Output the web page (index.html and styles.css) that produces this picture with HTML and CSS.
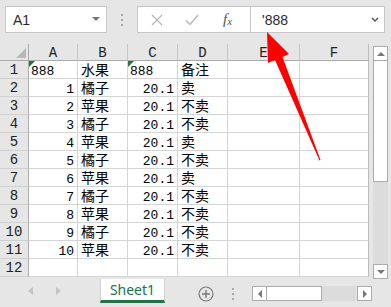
FILE: index.html
```html
<!DOCTYPE html>
<html lang="zh-CN">
<head>
    <meta charset="UTF-8">
    <title>Sheet1</title>
    <link rel="stylesheet" href="styles.css">
</head>
<body>

    <div class="formula-bar">
        <div class="name-box">
            <span>A1</span>
            <svg class="caret" width="8" height="5" viewBox="0 0 8 5"><path d="M0 0h8L4 4z" fill="#777"/></svg>
        </div>
        <div class="grip"><i></i><i></i><i></i></div>
        <div class="fx-box">
            <svg width="12" height="12" viewBox="0 0 12 12"><path d="M1 1l10 10M11 1L1 11" stroke="#b9b9b9" stroke-width="1.3"/></svg>
            <svg width="14" height="12" viewBox="0 0 14 12"><path d="M1 6.5l4 4L13 1" stroke="#b9b9b9" stroke-width="1.5" fill="none"/></svg>
            <span class="fx">f<sub>x</sub></span>
        </div>
        <div class="formula">
            <span>'888</span>
            <svg class="chev" width="8" height="5" viewBox="0 0 8 5"><path d="M1 1l3 3 3-3" stroke="#555" stroke-width="1.4" fill="none"/></svg>
        </div>
    </div>

    <div class="main">
        <div class="sheet">
            <div class="cell corner"><svg width="10" height="10" viewBox="0 0 10 10"><path d="M10 0v10H0z" fill="#b8b8b8"/></svg></div>
            <div class="cell hd">A</div><div class="cell hd">B</div><div class="cell hd">C</div><div class="cell hd">D</div><div class="cell hd">E</div><div class="cell hd">F</div>

            <div class="cell rh">1</div><div class="cell tx flag">888</div><div class="cell t">水果</div><div class="cell tx flag">888</div><div class="cell t">备注</div><div class="cell"></div><div class="cell"></div>
            <div class="cell rh">2</div><div class="cell n">1</div><div class="cell t">橘子</div><div class="cell n">20.1</div><div class="cell t">卖</div><div class="cell"></div><div class="cell"></div>
            <div class="cell rh">3</div><div class="cell n">2</div><div class="cell t">苹果</div><div class="cell n">20.1</div><div class="cell t">不卖</div><div class="cell"></div><div class="cell"></div>
            <div class="cell rh">4</div><div class="cell n">3</div><div class="cell t">橘子</div><div class="cell n">20.1</div><div class="cell t">不卖</div><div class="cell"></div><div class="cell"></div>
            <div class="cell rh">5</div><div class="cell n">4</div><div class="cell t">苹果</div><div class="cell n">20.1</div><div class="cell t">卖</div><div class="cell"></div><div class="cell"></div>
            <div class="cell rh">6</div><div class="cell n">5</div><div class="cell t">橘子</div><div class="cell n">20.1</div><div class="cell t">不卖</div><div class="cell"></div><div class="cell"></div>
            <div class="cell rh">7</div><div class="cell n">6</div><div class="cell t">苹果</div><div class="cell n">20.1</div><div class="cell t">卖</div><div class="cell"></div><div class="cell"></div>
            <div class="cell rh">8</div><div class="cell n">7</div><div class="cell t">橘子</div><div class="cell n">20.1</div><div class="cell t">不卖</div><div class="cell"></div><div class="cell"></div>
            <div class="cell rh">9</div><div class="cell n">8</div><div class="cell t">苹果</div><div class="cell n">20.1</div><div class="cell t">不卖</div><div class="cell"></div><div class="cell"></div>
            <div class="cell rh">10</div><div class="cell n">9</div><div class="cell t">橘子</div><div class="cell n">20.1</div><div class="cell t">不卖</div><div class="cell"></div><div class="cell"></div>
            <div class="cell rh">11</div><div class="cell n">10</div><div class="cell t">苹果</div><div class="cell n">20.1</div><div class="cell t">不卖</div><div class="cell"></div><div class="cell"></div>
            <div class="cell rh">12</div><div class="cell"></div><div class="cell"></div><div class="cell"></div><div class="cell"></div><div class="cell"></div><div class="cell"></div>
        </div>

        <div class="vscroll">
            <div class="sbtn"><svg width="8" height="4" viewBox="0 0 8 4"><path d="M0 4h8L4 0z" fill="#777"/></svg></div>
            <div class="vthumb"></div>
            <div class="track"></div>
            <div class="sbtn"><svg width="8" height="4" viewBox="0 0 8 4"><path d="M0 0h8L4 4z" fill="#777"/></svg></div>
        </div>
    </div>

    <div class="tabs">
        <div class="nav">
            <svg width="5" height="8" viewBox="0 0 5 8"><path d="M5 0v8L0 4z" fill="#c4c4c4"/></svg>
            <svg width="5" height="8" viewBox="0 0 5 8"><path d="M0 0v8l5-4z" fill="#c4c4c4"/></svg>
        </div>
        <div class="tab">Sheet1</div>
        <svg class="add" width="16" height="16" viewBox="0 0 16 16"><circle cx="8" cy="8" r="7" fill="none" stroke="#7a7a7a" stroke-width="1.2"/><path d="M8 4v8M4 8h8" stroke="#7a7a7a" stroke-width="1.4"/></svg>
        <div class="grip small"><i></i><i></i><i></i></div>
        <div class="hscroll">
            <div class="sbtn"><svg width="4" height="8" viewBox="0 0 4 8"><path d="M4 0v8L0 4z" fill="#777"/></svg></div>
            <div class="hthumb"></div>
            <div class="track"></div>
            <div class="sbtn"><svg width="4" height="8" viewBox="0 0 4 8"><path d="M0 0v8l4-4z" fill="#777"/></svg></div>
        </div>
    </div>

    <!-- red annotation arrow on top of everything -->
    <svg class="arrow" width="391" height="307" viewBox="0 0 391 307">
        <polygon points="267,32 289,54 282.5,57 320.5,160 319.5,160.5 275,60 268,63" fill="#fe0000"/>
    </svg>

</body>
</html>
```

FILE: styles.css
```css
body {
    margin: 0;
    width: 391px;
    height: 307px;
    overflow: hidden;
    background-color: #e6e6e6;
    font-family: "Liberation Sans", Arial, sans-serif;
    position: relative;
}

/* formula bar */
.formula-bar {
    height: 40px;
    box-sizing: border-box;
    padding: 6px 0 0 5px;
    display: flex;
    align-items: flex-start;
}
.name-box {
    width: 102px;
    height: 27px;
    box-sizing: border-box;
    background-color: #fff;
    border: 1px solid #c6c6c6;
    display: flex;
    align-items: center;
    justify-content: space-between;
    padding: 0 6px 0 7px;
    font-size: 14px;
    color: #2b2b2b;
}
.grip {
    width: 30px;
    height: 27px;
    display: flex;
    flex-direction: column;
    align-items: center;
    justify-content: center;
    gap: 3px;
}
.grip i {
    display: block;
    width: 2px;
    height: 2px;
    background-color: #a8a8a8;
}
.fx-box {
    width: 113px;
    height: 27px;
    box-sizing: border-box;
    background-color: #fff;
    border: 1px solid #c6c6c6;
    border-right: none;
    display: flex;
    align-items: center;
    padding-left: 13px;
    gap: 22px;
}
.fx {
    font-family: "Liberation Serif", serif;
    font-style: italic;
    font-size: 15px;
    color: #555;
    margin-left: 2px;
}
.fx sub {
    font-size: 11px;
    vertical-align: -1px;
}
.formula {
    width: 135px;
    height: 27px;
    box-sizing: border-box;
    background-color: #fff;
    border: 1px solid #c6c6c6;
    display: flex;
    align-items: center;
    justify-content: space-between;
    padding: 0 5px 0 11px;
    font-size: 14px;
    color: #2b2b2b;
}

/* grid */
.main {
    display: flex;
    height: 239px;
}
.sheet {
    display: grid;
    grid-template-columns: 29px 49px 50px 50px 50px 72px 69px;
    grid-template-rows: 17px repeat(12, 18px);
    padding-top: 4px;
    align-self: flex-start;
}
.cell {
    box-sizing: border-box;
    background-color: #fff;
    border-right: 1px solid #d4d4d4;
    border-bottom: 1px solid #d4d4d4;
    font-family: "Liberation Mono", monospace;
    font-size: 13px;
    line-height: 17px;
    padding: 2px 3px 0 2px;
    color: #000;
    position: relative;
    white-space: nowrap;
}
.cell:nth-child(7n) {
    border-right-color: #bcbcbc;
}
.hd, .rh, .corner {
    background-color: #e6e6e6;
    border-right-color: #c6c6c6;
    font-size: 14px;
    color: #222;
    text-align: center;
}
.hd {
    border-bottom-color: #ababab;
    line-height: 16px;
    padding: 1px 0 0;
}
.corner {
    border-right-color: #ababab;
    border-bottom-color: #ababab;
    display: flex;
    align-items: flex-end;
    justify-content: flex-end;
    padding: 0 2px 2px 0;
}
.rh {
    border-right-color: #ababab;
    border-bottom-color: #d0d0d0;
    padding: 1px 0 0;
}
.n {
    text-align: right;
}
.t {
    font-family: "Noto Sans CJK SC", sans-serif;
    font-size: 14px;
    padding: 0 0 0 3px;
}
.flag::before {
    content: "";
    position: absolute;
    top: 0;
    left: 0;
    border-top: 6px solid #1f7a3a;
    border-right: 6px solid transparent;
}

/* scrollbars */
.vscroll {
    margin: 6px 0 0 4px;
    width: 15px;
    height: 233px;
    display: flex;
    flex-direction: column;
}
.sbtn {
    width: 15px;
    height: 15px;
    box-sizing: border-box;
    background-color: #fff;
    border: 1px solid #ababab;
    display: flex;
    align-items: center;
    justify-content: center;
    flex-shrink: 0;
}
.vthumb {
    height: 121px;
    box-sizing: border-box;
    background-color: #fff;
    border: 1px solid #ababab;
    border-top: none;
}
.track {
    flex: 1;
    background-color: #dcdcdc;
}

/* sheet tabs */
.tabs {
    height: 28px;
    display: flex;
    align-items: flex-start;
}
.nav {
    width: 100px;
    height: 24px;
    display: flex;
    align-items: center;
    gap: 23px;
    padding-left: 28px;
    box-sizing: border-box;
}
.tab {
    width: 65px;
    height: 24px;
    box-sizing: border-box;
    background-color: #fff;
    border-bottom: 3px solid #217346;
    border-left: 1px solid #d0d0d0;
    border-right: 1px solid #d0d0d0;
    color: #217346;
    font-family: "Noto Sans", sans-serif;
    font-size: 14px;
    line-height: 21px;
    text-align: center;
}
.add {
    margin: 7px 0 0 33px;
}
.grip.small {
    width: 38px;
    height: 14px;
    margin-top: 8px;
    gap: 3px;
}
.hscroll {
    margin-top: 7px;
    width: 120px;
    height: 15px;
    display: flex;
}
.hthumb {
    width: 55px;
    box-sizing: border-box;
    background-color: #fff;
    border: 1px solid #ababab;
    border-left: none;
}
.hscroll .track {
    margin-right: 1px;
}

.arrow {
    position: absolute;
    top: 0;
    left: 0;
    pointer-events: none;
}
```
